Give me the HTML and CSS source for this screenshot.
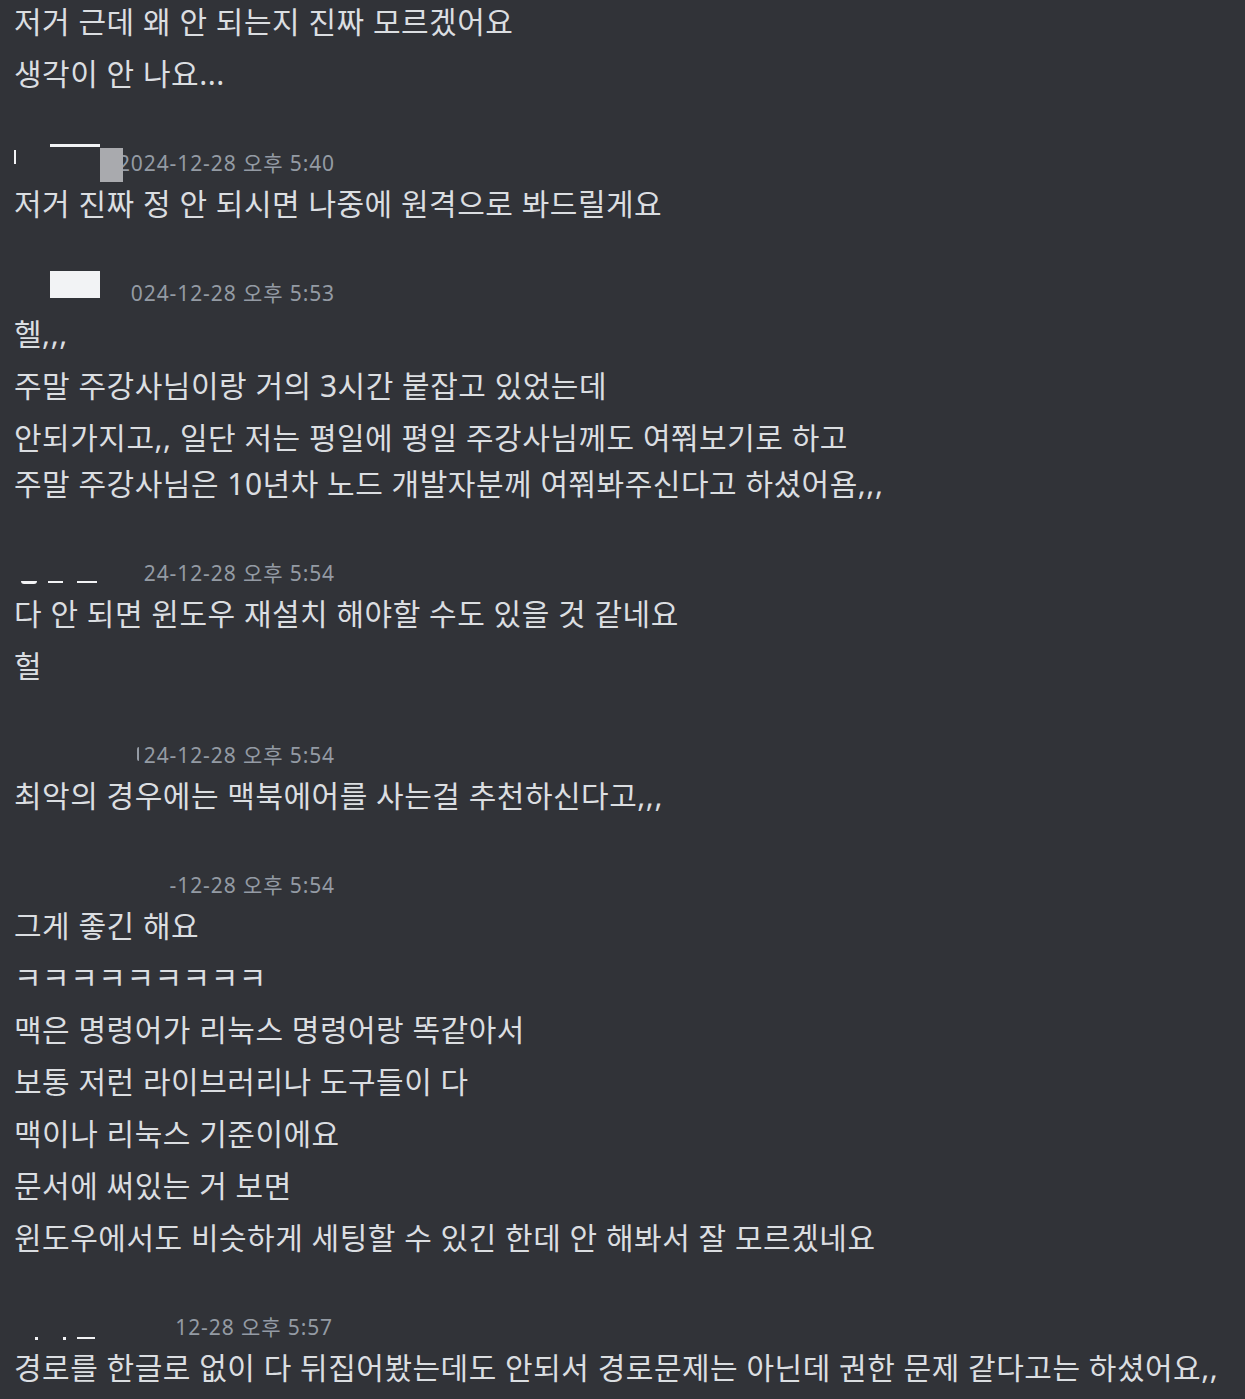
FILE: index.html
```html
<!DOCTYPE html>
<html lang="ko">
<head>
    <meta charset="UTF-8">
    <title>채팅</title>
    <link rel="stylesheet" href="styles.css">
</head>
<body>

<div class="chat">
    <!-- tail of the previous group -->
    <div class="message">저거 근데 왜 안 되는지 진짜 모르겠어요</div>
    <div class="message">생각이 안 나요...</div>

    <div class="group">
        <div class="header">
            <span class="mark mark-tick"></span>
            <span class="mark mark-line"></span>
            <span class="mark mark-grey"></span>
            <span class="stamp">2024-12-28 오후 5:40</span>
        </div>
        <div class="message">저거 진짜 정 안 되시면 나중에 원격으로 봐드릴게요</div>
    </div>

    <div class="group">
        <div class="header">
            <span class="mark mark-box"></span>
            <span class="stamp">024-12-28 오후 5:53</span>
        </div>
        <div class="message">헬,,,</div>
        <div class="message">주말 주강사님이랑 거의 3시간 붙잡고 있었는데</div>
        <div class="message">안되가지고,, 일단 저는 평일에 평일 주강사님께도 여쭤보기로 하고<br>주말 주강사님은 10년차 노드 개발자분께 여쭤봐주신다고 하셨어욤,,,</div>
    </div>

    <div class="group">
        <div class="header">
            <span class="mark mark-curve"></span>
            <span class="mark mark-dash1"></span>
            <span class="mark mark-dash2"></span>
            <span class="stamp">24-12-28 오후 5:54</span>
        </div>
        <div class="message">다 안 되면 윈도우 재설치 해야할 수도 있을 것 같네요</div>
        <div class="message">헐</div>
    </div>

    <div class="group">
        <div class="header">
            <span class="sliver"></span>
            <span class="stamp">24-12-28 오후 5:54</span>
        </div>
        <div class="message">최악의 경우에는 맥북에어를 사는걸 추천하신다고,,,</div>
    </div>

    <div class="group">
        <div class="header">
            <span class="stamp">-12-28 오후 5:54</span>
        </div>
        <div class="message">그게 좋긴 해요</div>
        <div class="message">ㅋㅋㅋㅋㅋㅋㅋㅋㅋ</div>
        <div class="message">맥은 명령어가 리눅스 명령어랑 똑같아서</div>
        <div class="message">보통 저런 라이브러리나 도구들이 다</div>
        <div class="message">맥이나 리눅스 기준이에요</div>
        <div class="message">문서에 써있는 거 보면</div>
        <div class="message">윈도우에서도 비슷하게 세팅할 수 있긴 한데 안 해봐서 잘 모르겠네요</div>
    </div>

    <div class="group">
        <div class="header last">
            <span class="mark mark-dot1"></span>
            <span class="mark mark-dot2"></span>
            <span class="mark mark-dash3"></span>
            <span class="stamp">12-28 오후 5:57</span>
        </div>
        <div class="message">경로를 한글로 없이 다 뒤집어봤는데도 안되서 경로문제는 아닌데 권한 문제 같다고는 하셨어요,,</div>
    </div>
</div>

</body>
</html>
```

FILE: styles.css
```css
body {
    margin: 0;
    padding: 0;
    background-color: #313338;
    font-family: "Noto Sans", "Noto Sans CJK KR", sans-serif;
    overflow: hidden;
}

.chat {
    margin-top: -4px;
    padding: 0 14px;
}

/* one block per sent message */
.message {
    padding: 3px 0;
    font-size: 30px;
    letter-spacing: 0.5px;
    line-height: 46px;
    color: #dbdee1;
    white-space: nowrap;
}

.group {
    margin-top: 46px;
}

/* username (redacted) + timestamp */
.header {
    position: relative;
    height: 32px;
    width: 321px;
    display: flex;
    align-items: center;
    justify-content: flex-end;
}

.header.last {
    width: 319px;
}

.stamp {
    font-size: 21px;
    letter-spacing: 0.9px;
    color: #949ba4;
    white-space: nowrap;
}

/* edge of a digit left by the redaction */
.sliver {
    width: 2px;
    height: 14px;
    margin-right: 5px;
    border-radius: 2px 0 0 2px;
    background-color: #949ba4;
}

/* leftovers of the blanked-out usernames */
.mark {
    position: absolute;
    background-color: #f2f3f5;
}

.mark-tick { left: 0; top: 4px; width: 2px; height: 14px; }
.mark-line { left: 36px; top: -2px; width: 50px; height: 3px; }
.mark-grey { left: 86px; top: 2px; width: 23px; height: 34px; background-color: #a9aaae; }
.mark-box { left: 36px; top: -5px; width: 50px; height: 27px; }
.mark-curve { left: 7px; top: 25px; width: 16px; height: 3px; border-radius: 0 0 8px 8px; }
.mark-dash1 { left: 34px; top: 25px; width: 15px; height: 2px; }
.mark-dash2 { left: 63px; top: 25px; width: 20px; height: 2px; }
.mark-dot1 { left: 21px; top: 27px; width: 3px; height: 3px; }
.mark-dot2 { left: 49px; top: 27px; width: 3px; height: 3px; }
.mark-dash3 { left: 63px; top: 27px; width: 18px; height: 2px; }
```
